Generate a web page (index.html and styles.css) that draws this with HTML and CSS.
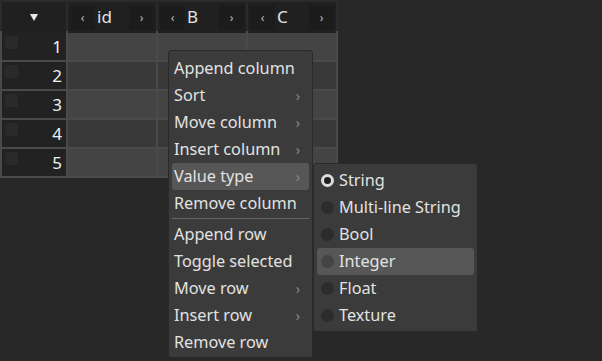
FILE: index.html
```html
<!DOCTYPE html>
<html>
<head>
<meta charset="utf-8">
<link rel="stylesheet" href="styles.css">
</head>
<body>
<div class="table">
  <div class="head">
    <div class="hcell corner"><span class="tri"></span></div>
    <div class="hcell"><span class="hbtn">‹</span><span class="hlabel">id</span><span class="hbtn">›</span></div>
    <div class="hcell"><span class="hbtn">‹</span><span class="hlabel">B</span><span class="hbtn">›</span></div>
    <div class="hcell"><span class="hbtn">‹</span><span class="hlabel">C</span><span class="hbtn">›</span></div>
  </div>
  <div class="body">
    <div class="idx"><span class="chk"></span>1</div><div class="cell odd"></div><div class="cell odd"></div><div class="cell odd"></div>
    <div class="idx"><span class="chk"></span>2</div><div class="cell even"></div><div class="cell even"></div><div class="cell even"></div>
    <div class="idx"><span class="chk"></span>3</div><div class="cell odd"></div><div class="cell odd"></div><div class="cell odd"></div>
    <div class="idx"><span class="chk"></span>4</div><div class="cell even"></div><div class="cell even"></div><div class="cell even"></div>
    <div class="idx"><span class="chk"></span>5</div><div class="cell odd"></div><div class="cell odd"></div><div class="cell odd"></div>
  </div>
</div>

<div class="menu main">
  <div class="item">Append column</div>
  <div class="item sub">Sort</div>
  <div class="item sub">Move column</div>
  <div class="item sub">Insert column</div>
  <div class="item sub hl">Value type</div>
  <div class="item">Remove column</div>
  <div class="sep"></div>
  <div class="item">Append row</div>
  <div class="item">Toggle selected</div>
  <div class="item sub">Move row</div>
  <div class="item sub">Insert row</div>
  <div class="item">Remove row</div>
</div>

<div class="menu submenu">
  <div class="item radio on"><span class="dot"></span>String</div>
  <div class="item radio"><span class="dot"></span>Multi-line String</div>
  <div class="item radio"><span class="dot"></span>Bool</div>
  <div class="item radio hl"><span class="dot"></span>Integer</div>
  <div class="item radio"><span class="dot"></span>Float</div>
  <div class="item radio"><span class="dot"></span>Texture</div>
</div>
</body>
</html>
```

FILE: styles.css
```css
html, body {
  margin: 0;
  padding: 0;
  width: 602px;
  height: 361px;
  overflow: hidden;
  background: #282828;
  font-family: "Noto Sans", "Open Sans", sans-serif;
  font-size: 16.25px;
  color: #e2e2e2;
}

.table {
  width: 338px;
}

.head {
  display: grid;
  grid-template-columns: 64px 88px 88px 88px;
  gap: 2px;
  padding: 2px 2px 0 2px;
  background: #2b2b2b;
  height: 29px;
}

.hcell {
  background: #202020;
  display: flex;
  align-items: center;
  padding: 3px 2px;
  box-sizing: border-box;
}

.corner {
  justify-content: center;
}

.tri {
  width: 0;
  height: 0;
  border-left: 4px solid transparent;
  border-right: 4px solid transparent;
  border-top: 7px solid #e8e8e8;
}

.hbtn {
  width: 25px;
  height: 25px;
  background: #1c1c1c;
  color: #bdbdbd;
  font-size: 12px;
  display: flex;
  align-items: center;
  justify-content: center;
  line-height: 1;
}

.hlabel {
  flex: 1;
  padding-left: 2px;
  font-size: 17px;
  line-height: 1;
  padding-bottom: 2px;
}

.body {
  display: grid;
  grid-template-columns: 64px 88px 88px 88px;
  grid-auto-rows: 27px;
  gap: 2px;
  padding: 2px;
  background: #4a4a4a;
}

.idx {
  background: #222222;
  display: flex;
  align-items: center;
  justify-content: space-between;
  padding: 0 4px 0 3px;
  font-size: 17px;
  color: #f0f0f0;
}

.chk {
  width: 13px;
  height: 13px;
  border-radius: 2px;
  background: #2a2a2a;
  margin-top: -8px;
}

.cell.odd { background: #444444; }
.cell.even { background: #393939; }

.menu {
  position: absolute;
  background: #3b3b3b;
  border: 1px solid #2a2a2a;
  border-radius: 3px;
  box-sizing: border-box;
}

.main {
  left: 168px;
  top: 50px;
  width: 145px;
  padding: 4px 3px 1px 3px;
}

.submenu {
  left: 313px;
  top: 163px;
  width: 165px;
  padding: 3px 3px 2px 3px;
}

.item {
  height: 27px;
  line-height: 27px;
  padding-left: 2px;
  border-radius: 3px;
  position: relative;
  white-space: nowrap;
}

.item.hl {
  background: #575757;
}

.item.sub::after {
  content: "›";
  position: absolute;
  right: 9px;
  top: 0;
  color: #8a8a8a;
  font-size: 14px;
}

.sep {
  height: 1px;
  background: #666666;
  margin: 1px 0 2px 0;
}

.radio {
  display: flex;
  align-items: center;
  padding-left: 4px;
}

.dot {
  width: 13px;
  height: 13px;
  border-radius: 50%;
  background: #2c2c2c;
  margin-right: 5px;
  box-sizing: border-box;
}

.hl .dot {
  background: #444444;
}

.on .dot {
  background: #1e1e1e;
  border: 3px solid #dcdcdc;
}
```
